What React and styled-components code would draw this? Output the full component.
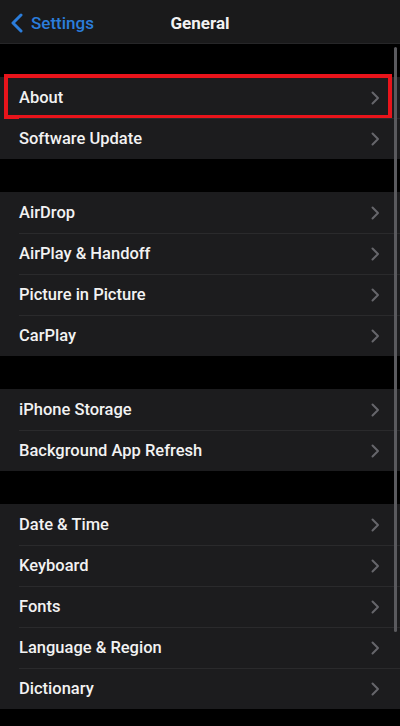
import styled, { createGlobalStyle } from "styled-components";

const GlobalStyle = createGlobalStyle`
	html, body {
		margin: 0;
		padding: 0;
		background: #000;
	}
	body {
		font-family: Roboto, "Liberation Sans", sans-serif;
		-webkit-font-smoothing: antialiased;
	}
`;

const Screen = styled.div`
	position: relative;
	width: 400px;
	height: 726px;
	background: #000;
	overflow: hidden;
`;

const NavBar = styled.div`
	height: 44px;
	box-sizing: border-box;
	padding: 3px 11px 0;
	display: grid;
	grid-template-columns: 1fr auto 1fr;
	align-items: center;
	background: #1a1a1b;
	border-bottom: 1px solid #262628;
`;

const Back = styled.div`
	display: flex;
	align-items: center;
	gap: 8px;
	color: #2b7ddb;
	font-size: 17px;
	font-weight: 500;
`;

const Title = styled.div`
	color: #f2f2f2;
	font-size: 17px;
	font-weight: 700;
`;

const Content = styled.div`
	display: flex;
	flex-direction: column;
	gap: 33px;
	padding-top: 33px;
`;

const Group = styled.div`
	background: #1c1c1e;
`;

const Row = styled.div`
	position: relative;
	height: 41px;
	display: flex;
	align-items: center;
	justify-content: space-between;
	padding: 0 20px 0 19px;
	color: #f2f2f2;
	font-size: 16.5px;
	font-weight: 500;
	${(p) =>
		!p.$first &&
		`
		&::before {
			content: "";
			position: absolute;
			top: 0;
			left: 19px;
			right: 0;
			height: 1px;
			background: #2a2a2c;
		}
	`}
`;

const Highlight = styled.div`
	position: absolute;
	left: 4px;
	right: 8px;
	top: -3px;
	bottom: -1px;
	border: 4px solid #e8141b;
	pointer-events: none;
`;

const ScrollBar = styled.div`
	position: absolute;
	left: 394px;
	top: 47px;
	width: 3px;
	height: 585px;
	border-radius: 2px;
	background: #5a5a5e;
`;

const Chevron = () => (
	<svg width="9" height="14" viewBox="0 0 9 14">
		<path
			d="M1.5 1.5 L7 7 L1.5 12.5"
			fill="none"
			stroke="#66666b"
			strokeWidth="2"
			strokeLinecap="round"
			strokeLinejoin="round"
		/>
	</svg>
);

const groups = [
	["About", "Software Update"],
	["AirDrop", "AirPlay & Handoff", "Picture in Picture", "CarPlay"],
	["iPhone Storage", "Background App Refresh"],
	["Date & Time", "Keyboard", "Fonts", "Language & Region", "Dictionary"],
];

const App = () => {
	return (
		<Screen>
			<GlobalStyle />
			<NavBar>
				<Back>
					<svg width="12" height="20" viewBox="0 0 12 20">
						<path
							d="M10 2 L2 10 L10 18"
							fill="none"
							stroke="#2b7ddb"
							strokeWidth="3"
							strokeLinecap="round"
							strokeLinejoin="round"
						/>
					</svg>
					Settings
				</Back>
				<Title>General</Title>
			</NavBar>
			<Content>
				{groups.map((items, gi) => (
					<Group key={gi}>
						{items.map((label, i) => (
							<Row key={label} $first={i === 0}>
								{label}
								<Chevron />
								{label === "About" && <Highlight />}
							</Row>
						))}
					</Group>
				))}
			</Content>
			<ScrollBar />
		</Screen>
	);
};

export default App;
